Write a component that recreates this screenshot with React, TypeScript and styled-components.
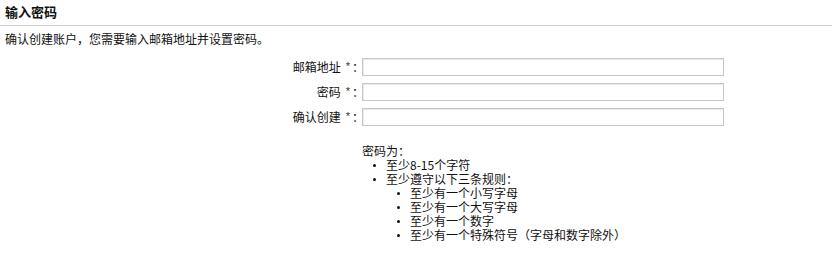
import React from "react";
import styled, { createGlobalStyle } from "styled-components";

const Global = createGlobalStyle`
  html, body { margin: 0; padding: 0; background: #fff; }
  body {
    font-family: "Noto Sans CJK SC", sans-serif;
    font-size: 12px;
    color: #111;
  }
`;

const Page = styled.div`
  width: 832px;
  height: 255px;
  overflow: hidden;
  font-family: "Noto Sans CJK SC", sans-serif;
`;

const Header = styled.h2`
  margin: 0;
  height: 25px;
  padding: 0 0 0 5px;
  border-bottom: 1px solid #cfcfcf;
  font-size: 13px;
  font-weight: bold;
  line-height: 24px;
  color: #111;
`;

const Intro = styled.p`
  margin: 0;
  padding: 6px 0 0 5px;
  height: 14px;
  line-height: 14px;
  font-size: 12px;
`;

const Form = styled.div`
  display: grid;
  grid-template-columns: 358px 362px;
  grid-auto-rows: 18px;
  column-gap: 4px;
  row-gap: 7px;
  padding-top: 12px;
`;

const Label = styled.label`
  display: flex;
  justify-content: flex-end;
  align-items: center;
  height: 18px;
  font-size: 12px;
  line-height: 18px;
  color: #111;
  white-space: nowrap;
`;

const Star = styled.span`
  font-family: "Liberation Sans", sans-serif;
  font-size: 11px;
  color: #333;
  margin: 0 2px 0 5px;
  position: relative;
  top: -1px;
`;

const Colon = styled.span`
  margin-right: -6px;
`;

const Input = styled.input`
  box-sizing: border-box;
  width: 362px;
  height: 18px;
  margin: 0;
  padding: 0 3px;
  border: 1px solid #c6c6c6;
  box-shadow: inset 1px 1px 1px #e8e8e8;
  background: #fff;
  font-size: 12px;
  outline: none;
`;

const Hints = styled.div`
  margin: 18px 0 0 362px;
  font-size: 12px;
  line-height: 14px;
`;

const Rules = styled.ul`
  list-style: none;
  margin: 0;
  padding: 0 0 0 24px;
`;

const Rule = styled.li`
  position: relative;
  line-height: 14px;
  &::before {
    content: "";
    position: absolute;
    left: -13px;
    top: 6px;
    width: 3px;
    height: 3px;
    border-radius: 50%;
    background: #111;
  }
`;

const RuleText = styled.div`
  line-height: 14px;
`;

export default function App() {
  return (
    <Page>
      <Global />
      <Header>输入密码</Header>
      <Intro>确认创建账户，您需要输入邮箱地址并设置密码。</Intro>
      <Form>
        <Label htmlFor="email">
          邮箱地址<Star>*</Star>
          <Colon>：</Colon>
        </Label>
        <Input id="email" type="text" />
        <Label htmlFor="pwd">
          密码<Star>*</Star>
          <Colon>：</Colon>
        </Label>
        <Input id="pwd" type="password" />
        <Label htmlFor="pwd2">
          确认创建<Star>*</Star>
          <Colon>：</Colon>
        </Label>
        <Input id="pwd2" type="password" />
      </Form>
      <Hints>
        密码为：
        <Rules>
          <Rule>至少8-15个字符</Rule>
          <Rule>
            <RuleText>至少遵守以下三条规则：</RuleText>
            <Rules>
              <Rule>至少有一个小写字母</Rule>
              <Rule>至少有一个大写字母</Rule>
              <Rule>至少有一个数字</Rule>
              <Rule>至少有一个特殊符号（字母和数字除外）</Rule>
            </Rules>
          </Rule>
        </Rules>
      </Hints>
    </Page>
  );
}
